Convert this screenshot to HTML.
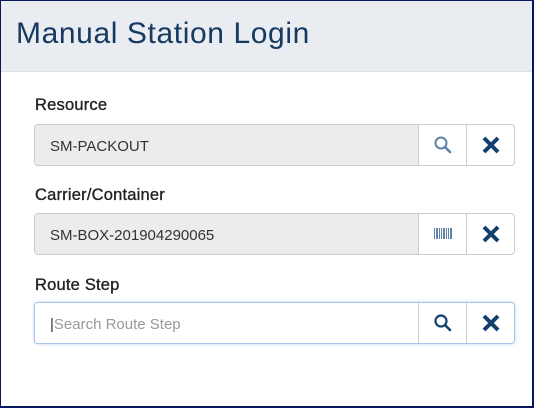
<!DOCTYPE html>
<html><head><style>
*{box-sizing:border-box;}
body{margin:0;width:534px;height:408px;overflow:hidden;background:#fff;font-family:"Liberation Sans",sans-serif;}
.frame{position:absolute;left:0;top:0;width:534px;height:408px;border:1px solid #0a1560;border-right-width:2px;border-bottom-width:2px;}
.hdr{position:absolute;left:0;top:0;width:531px;height:71px;background:#e9ecf1;border-bottom:1px solid #dde1e7;}
.hdr h1{margin:0;position:absolute;left:15px;top:16px;font-size:30px;font-weight:normal;color:#163a60;letter-spacing:0.6px;}
.lbl{position:absolute;left:34px;font-size:16.5px;color:#222;-webkit-text-stroke:0.35px #222;letter-spacing:0.2px;}
.grp{position:absolute;left:33px;width:481px;height:42px;border:1px solid #ccc;border-radius:4px;overflow:hidden;display:flex;background:#fff;}
.inp{width:384px;flex:none;background:#ececec;border-right:1px solid #ccc;font-size:15px;color:#333;padding-left:15px;padding-top:2px;line-height:40px;}
.btn{width:48px;flex:none;border-right:1px solid #ccc;display:flex;align-items:center;justify-content:center;}
.btn:last-child{border-right:none;flex:1;}
.focus{border-color:#a9c6e8;box-shadow:0 0 3px #bcd4f0;}
.focus .inp{background:#fff;color:#999;}
</style></head><body>
<div class="frame">
<div class="hdr"><h1>Manual Station Login</h1></div>
<div class="lbl" style="top:95px">Resource</div>
<div class="grp" style="top:123px"><div class="inp">SM-PACKOUT</div>
<div class="btn"><svg width="20" height="20" viewBox="0 0 20 20"><circle cx="8" cy="8" r="5.5" fill="none" stroke="#5f82a8" stroke-width="2"/><path d="M12 12l5 5" stroke="#5f82a8" stroke-width="2.5" stroke-linecap="round"/></svg></div>
<div class="btn"><svg width="18" height="18" viewBox="0 0 18 18"><path d="M2 2L16 16M16 2L2 16" stroke="#123f6e" stroke-width="4"/></svg></div></div>
<div class="lbl" style="top:185px">Carrier/Container</div>
<div class="grp" style="top:212px"><div class="inp">SM-BOX-201904290065</div>
<div class="btn"><svg width="20" height="16" viewBox="0 0 20 16"><g fill="#5f82a8"><rect x="1" y="2" width="1" height="11"/><rect x="3" y="2" width="2" height="11"/><rect x="6" y="2" width="1" height="11"/><rect x="8" y="2" width="1" height="11"/><rect x="10" y="2" width="2" height="11"/><rect x="13" y="2" width="1" height="11"/><rect x="15" y="2" width="1" height="11"/><rect x="17" y="2" width="2" height="11"/></g></svg></div>
<div class="btn"><svg width="18" height="18" viewBox="0 0 18 18"><path d="M2 2L16 16M16 2L2 16" stroke="#123f6e" stroke-width="4"/></svg></div></div>
<div class="lbl" style="top:275px">Route Step</div>
<div class="grp focus" style="top:301px"><div class="inp"><span style="color:#333">|</span>Search Route Step</div>
<div class="btn"><svg width="20" height="20" viewBox="0 0 20 20"><circle cx="8" cy="8" r="5.5" fill="none" stroke="#123f6e" stroke-width="2.2"/><path d="M12 12l5 5" stroke="#123f6e" stroke-width="2.6" stroke-linecap="round"/></svg></div>
<div class="btn"><svg width="18" height="18" viewBox="0 0 18 18"><path d="M2 2L16 16M16 2L2 16" stroke="#123f6e" stroke-width="4"/></svg></div></div>
</div>
</body></html>
